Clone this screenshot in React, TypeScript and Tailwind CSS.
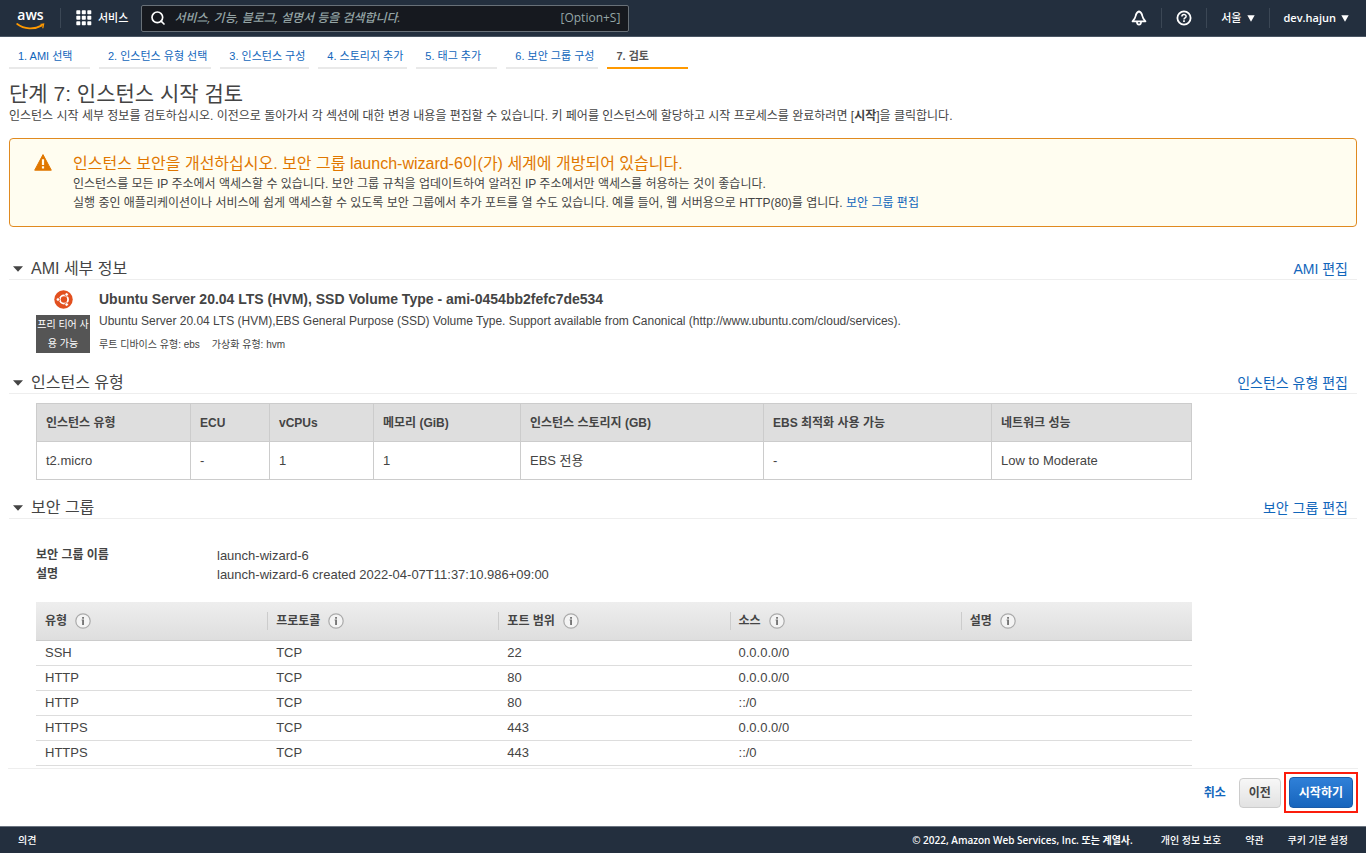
import { ReactNode } from "react";
import { Search } from "lucide-react";

const STEPS = [
  "1. AMI 선택",
  "2. 인스턴스 유형 선택",
  "3. 인스턴스 구성",
  "4. 스토리지 추가",
  "5. 태그 추가",
  "6. 보안 그룹 구성",
  "7. 검토",
];

const INSTANCE_COLUMNS = [
  { label: "인스턴스 유형", value: "t2.micro", width: "w-[154px]" },
  { label: "ECU", value: "-", width: "w-[79px]" },
  { label: "vCPUs", value: "1", width: "w-[104px]" },
  { label: "메모리 (GiB)", value: "1", width: "w-[147px]" },
  { label: "인스턴스 스토리지 (GB)", value: "EBS 전용", width: "w-[243px]" },
  { label: "EBS 최적화 사용 가능", value: "-", width: "w-[228px]" },
  { label: "네트워크 성능", value: "Low to Moderate", width: "" },
];

const RULE_COLUMNS = ["유형", "프로토콜", "포트 범위", "소스", "설명"];

const RULES = [
  ["SSH", "TCP", "22", "0.0.0.0/0", ""],
  ["HTTP", "TCP", "80", "0.0.0.0/0", ""],
  ["HTTP", "TCP", "80", "::/0", ""],
  ["HTTPS", "TCP", "443", "0.0.0.0/0", ""],
  ["HTTPS", "TCP", "443", "::/0", ""],
];

// ============================================================
// 아이콘
// ============================================================
function AwsLogo() {
  return (
    <span role="img" aria-label="aws" className="flex w-[29px] flex-col items-center">
      <span className="text-[14px] leading-4 font-semibold">aws</span>
      <svg width="29" height="7" viewBox="0 0 29 7" fill="none" stroke="#ff9900" strokeLinecap="round" aria-hidden="true">
        <path d="M1.200 1c7 5.300 17 5.600 24.300 1.600" strokeWidth="1.800" />
        <path d="M23.600 0.900 28.400 0.300 27.400 5.200 26.200 5.200 26.600 2.400z" fill="#ff9900" stroke="none" />
      </svg>
    </span>
  );
}

function GridIcon() {
  return (
    <svg width="16" height="16" viewBox="0 0 16 16" fill="#fff" aria-hidden="true">
      {[0, 5.5, 11].map((y) =>
        [0, 5.5, 11].map((x) => (
          <rect key={`${x}-${y}`} x={x + 0.3} y={y + 0.3} width="4" height="4" rx="0.7" />
        ))
      )}
    </svg>
  );
}

function BellIcon() {
  return (
    <svg width="16" height="16" viewBox="0 0 16 16" fill="none" stroke="#fff" strokeWidth="1.700" strokeLinejoin="round" aria-hidden="true">
      <path d="M8 1.400C5.900 2.200 5 3.600 4.600 6.200C4.300 8.300 3.400 9.400 1.500 11.300H14.500C12.600 9.400 11.700 8.300 11.400 6.200C11 3.600 10.100 2.200 8 1.400Z" />
      <path d="M5.900 11.500c0 4.200 4.200 4.200 4.200 0" />
    </svg>
  );
}

function HelpIcon() {
  return (
    <svg width="16" height="16" viewBox="0 0 16 16" fill="none" stroke="#fff" strokeWidth="1.800" aria-hidden="true">
      <circle cx="8" cy="8" r="6.600" />
      <path d="M5.900 6.600c0-2.700 4.200-2.700 4.200-.2 0 1.500-2.100 1.500-2.100 3" strokeWidth="1.500" />
      <path d="M8 10.300v1.600" strokeWidth="1.700" />
    </svg>
  );
}

function Caret() {
  return (
    <svg width="8" height="7" viewBox="0 0 8 7" fill="currentColor" aria-hidden="true">
      <path d="M0.300 0.300H7.700L4 6.800Z" />
    </svg>
  );
}

function WarningIcon() {
  return (
    <svg width="18" height="17" viewBox="0 0 18 17" className="mt-[15px] shrink-0" aria-hidden="true">
      <path d="M9 0.600 17.300 16.200H0.700Z" fill="#e07700" stroke="#e07700" strokeLinejoin="round" />
      <path d="M7.900 5.200h2.200v5.800H7.900zM7.900 12.300h2.200v2.100H7.900z" fill="#fffdf0" />
    </svg>
  );
}

function UbuntuIcon() {
  return (
    <svg width="19" height="19" viewBox="0 0 20 20" aria-hidden="true">
      <circle cx="10" cy="10" r="9.700" fill="#e2501f" />
      <circle cx="10.500" cy="10" r="4.300" fill="none" stroke="#fff" strokeWidth="1.900" />
      <g stroke="#e2501f" strokeWidth="0.900" fill="#fff">
        <circle cx="4.200" cy="10" r="1.900" />
        <circle cx="13.300" cy="4.700" r="1.900" />
        <circle cx="13.300" cy="15.300" r="1.900" />
      </g>
    </svg>
  );
}

function InfoIcon() {
  return (
    <svg width="16" height="16" viewBox="0 0 16 16" aria-hidden="true">
      <circle cx="8" cy="8" r="7.200" fill="#f4f4f4" stroke="#aaa" strokeWidth="1.200" />
      <path d="M7.100 4h1.900v1.700H7.100zM6.600 6.500H9V12H7.100V7.500h-.5z" fill="#777" />
    </svg>
  );
}

// ============================================================
// 레이아웃
// ============================================================
function Divider() {
  return <span className="h-5 w-px bg-[#3b4755]" />;
}

function Header() {
  return (
    <header className="flex h-[37px] items-center border-b border-[#4a5664] bg-[#232f3e] pr-[17px] pl-4 font-['Open_Sans','Noto_Sans_CJK_KR',sans-serif] text-[11px] font-medium text-white">
      <a href="#" className="mr-[15px]">
        <AwsLogo />
      </a>
      <Divider />
      <button type="button" className="ml-[15px] flex items-center gap-[6px]">
        <GridIcon />
        서비스
      </button>
      <label className="ml-[13px] flex h-[27px] w-[488px] items-center rounded-xs border border-[#687078] bg-[#16191f] px-2">
        <Search size={16} strokeWidth={2.5} />
        <input
          type="text"
          aria-label="검색"
          placeholder="서비스, 기능, 블로그, 설명서 등을 검색합니다."
          className="ml-2 min-w-0 flex-1 bg-transparent text-[12px] outline-none placeholder:text-[#95a5a6] placeholder:italic"
        />
        <span className="text-[12px] text-[#95a5a6]">[Option+S]</span>
      </label>
      <div className="ml-auto flex items-center">
        <button type="button" aria-label="알림" className="mr-[14px]">
          <BellIcon />
        </button>
        <Divider />
        <button type="button" aria-label="도움말" className="mx-[14px]">
          <HelpIcon />
        </button>
        <Divider />
        <button type="button" className="mx-[14px] flex items-center gap-[5px]">
          서울
          <Caret />
        </button>
        <Divider />
        <button type="button" className="ml-[14px] flex items-center gap-[5px] font-semibold">
          dev.hajun
          <Caret />
        </button>
      </div>
    </header>
  );
}

function Steps() {
  return (
    <nav className="flex gap-[9px] text-[11px]">
      {STEPS.map((step, i) => {
        const current = i === STEPS.length - 1;
        return (
          <a
            key={step}
            href="#"
            aria-current={current ? "step" : undefined}
            className={`flex h-8 min-w-[81px] items-center border-b-2 pt-2 pr-1 pl-[9px] ${
              current ? "border-[#ff9900] font-bold text-[#555]" : "border-[#e9e9e9] text-[#1166bb]"
            }`}
          >
            {step}
          </a>
        );
      })}
    </nav>
  );
}

function Section({ title, edit, className, children }: { title: string; edit: string; className: string; children: ReactNode }) {
  return (
    <section className={className}>
      <div className="flex h-[22px] items-center justify-between border-b border-[#eee] pr-[9px] pl-[3px]">
        <h2 className="text-[16px] leading-5">
          <button type="button" className="flex items-center gap-[7px]">
            <svg width="12" height="6" viewBox="0 0 12 6" fill="#444" aria-hidden="true">
              <path d="M1 0.200h10L6 5.800z" />
            </svg>
            {title}
          </button>
        </h2>
        <a href="#" className="text-[14px] leading-5 text-[#1166bb]">
          {edit}
        </a>
      </div>
      <div className="pl-[27px]">{children}</div>
    </section>
  );
}

function SecurityAlert() {
  return (
    <div role="alert" className="mt-3 flex h-[89px] gap-[21px] rounded-[4px] border border-[#e08a20] bg-[#fffdf0] pl-6">
      <WarningIcon />
      <div className="pt-[14px] text-[12px] leading-[19px]">
        <h2 className="text-[16px] leading-[22px] text-[#e07700]">
          인스턴스 보안을 개선하십시오. 보안 그룹 launch-wizard-6이(가) 세계에 개방되어 있습니다.
        </h2>
        <p>인스턴스를 모든 IP 주소에서 액세스할 수 있습니다. 보안 그룹 규칙을 업데이트하여 알려진 IP 주소에서만 액세스를 허용하는 것이 좋습니다.</p>
        <p>
          실행 중인 애플리케이션이나 서비스에 쉽게 액세스할 수 있도록 보안 그룹에서 추가 포트를 열 수도 있습니다. 예를 들어, 웹 서버용으로 HTTP(80)를 엽니다.{" "}
          <a href="#" className="text-[#1166bb]">
            보안 그룹 편집
          </a>
        </p>
      </div>
    </div>
  );
}

function AmiDetails() {
  return (
    <div className="flex gap-[9px] pt-[10px]">
      <div className="flex w-[54px] flex-col items-center gap-[6px]">
        <UbuntuIcon />
        <span className="bg-[#555] text-center text-[10px] leading-[19px] break-all text-white">
          프리 티어 사용 가능
        </span>
      </div>
      <div>
        <h3 className="text-[14px] leading-[18px] font-bold">
          Ubuntu Server 20.04 LTS (HVM), SSD Volume Type - ami-0454bb2fefc7de534
        </h3>
        <p className="mt-1 text-[12px] leading-[19px]">
          Ubuntu Server 20.04 LTS (HVM),EBS General Purpose (SSD) Volume Type. Support available from Canonical (http://www.ubuntu.com/cloud/services).
        </p>
        <p className="mt-1 flex gap-3 text-[10px] leading-[19px]">
          <span>루트 디바이스 유형: ebs</span>
          <span>가상화 유형: hvm</span>
        </p>
      </div>
    </div>
  );
}

function InstanceTable() {
  return (
    <table className="mt-[9px] w-7/8 table-fixed border-collapse text-left">
      <thead className="bg-[#dedede] text-[12px]">
        <tr className="h-[38px]">
          {INSTANCE_COLUMNS.map((c) => (
            <th key={c.label} className={`border border-[#ccc] px-[9px] ${c.width}`}>
              {c.label}
            </th>
          ))}
        </tr>
      </thead>
      <tbody className="text-[13px]">
        <tr className="h-[38px]">
          {INSTANCE_COLUMNS.map((c) => (
            <td key={c.label} className="border border-[#ccc] px-[9px]">
              {c.value}
            </td>
          ))}
        </tr>
      </tbody>
    </table>
  );
}

function SecurityGroup() {
  return (
    <>
      <dl className="grid grid-cols-[181px_1fr] pt-[27px] text-[12px] leading-[19px]">
        <dt className="font-bold">보안 그룹 이름</dt>
        <dd className="text-[13px]">launch-wizard-6</dd>
        <dt className="font-bold">설명</dt>
        <dd className="text-[13px]">launch-wizard-6 created 2022-04-07T11:37:10.986+09:00</dd>
      </dl>
      <table className="mt-[18px] w-7/8 table-fixed border-collapse text-left">
        <thead className="bg-linear-to-b from-[#eee] to-[#dedede] text-[12px]">
          <tr className="h-[38px] border-b border-[#ccc]">
            {RULE_COLUMNS.map((label, i) => (
              <th key={label}>
                <div className={`flex h-[18px] items-center gap-2 border-l pl-2 ${i > 0 ? "border-[#ccc]" : "border-transparent"}`}>
                  {label}
                  <InfoIcon />
                </div>
              </th>
            ))}
          </tr>
        </thead>
        <tbody className="text-[13px] leading-4">
          {RULES.map((rule, i) => (
            <tr key={i} className="h-[25px] border-b border-[#ddd]">
              {rule.map((cell, j) => (
                <td key={j} className="px-[9px]">
                  {cell}
                </td>
              ))}
            </tr>
          ))}
        </tbody>
      </table>
    </>
  );
}

function Actions() {
  return (
    <div className="mx-2 mt-auto flex h-[58px] items-start justify-end border-t border-[#eee] pt-[3px] text-[12px] font-bold">
      <a href="#" className="mt-3 mr-[13px] text-[#1166bb]">
        취소
      </a>
      <button type="button" className="mt-[6px] mr-[3px] h-[30px] rounded-[4px] border border-[#ccc] bg-linear-to-b from-[#f7f7f7] to-[#e2e2e2] px-[9px]">
        이전
      </button>
      <div className="border-2 border-[#fb1c0c] p-[3px]">
        <button type="button" className="h-[31px] rounded-[4px] border border-[#1a5ba8] bg-linear-to-b from-[#2f80d8] to-[#1665bd] px-[9px] text-white">
          시작하기
        </button>
      </div>
    </div>
  );
}

function Footer() {
  return (
    <footer className="flex h-[27px] items-center gap-6 border-t border-[#6b7480] bg-[#232f3e] px-[18px] font-['Open_Sans','Noto_Sans_CJK_KR',sans-serif] text-[10px] font-medium text-white">
      <a href="#" className="mr-auto">
        의견
      </a>
      <span className="mr-1 font-semibold">© 2022, Amazon Web Services, Inc. 또는 계열사.</span>
      <a href="#">개인 정보 보호</a>
      <a href="#">약관</a>
      <a href="#">쿠키 기본 설정</a>
    </footer>
  );
}

export default function App() {
  return (
    <div className="flex min-h-screen flex-col bg-white font-['Liberation_Sans','Noto_Sans_CJK_KR',sans-serif] text-[#444]">
      <Header />
      <main className="px-[9px]">
        <Steps />
        <h1 className="mt-[13px] text-[21px] leading-6">단계 7: 인스턴스 시작 검토</h1>
        <p className="text-[12px] leading-5">
          인스턴스 시작 세부 정보를 검토하십시오. 이전으로 돌아가서 각 섹션에 대한 변경 내용을 편집할 수 있습니다. 키 페어를 인스턴스에 할당하고 시작 프로세스를 완료하려면 [<b>시작</b>]을 클릭합니다.
        </p>
        <SecurityAlert />
        <Section title="AMI 세부 정보" edit="AMI 편집" className="mt-[31px]">
          <AmiDetails />
        </Section>
        <Section title="인스턴스 유형" edit="인스턴스 유형 편집" className="mt-[18px]">
          <InstanceTable />
        </Section>
        <Section title="보안 그룹" edit="보안 그룹 편집" className="mt-[17px]">
          <SecurityGroup />
        </Section>
      </main>
      <Actions />
      <Footer />
    </div>
  );
}
